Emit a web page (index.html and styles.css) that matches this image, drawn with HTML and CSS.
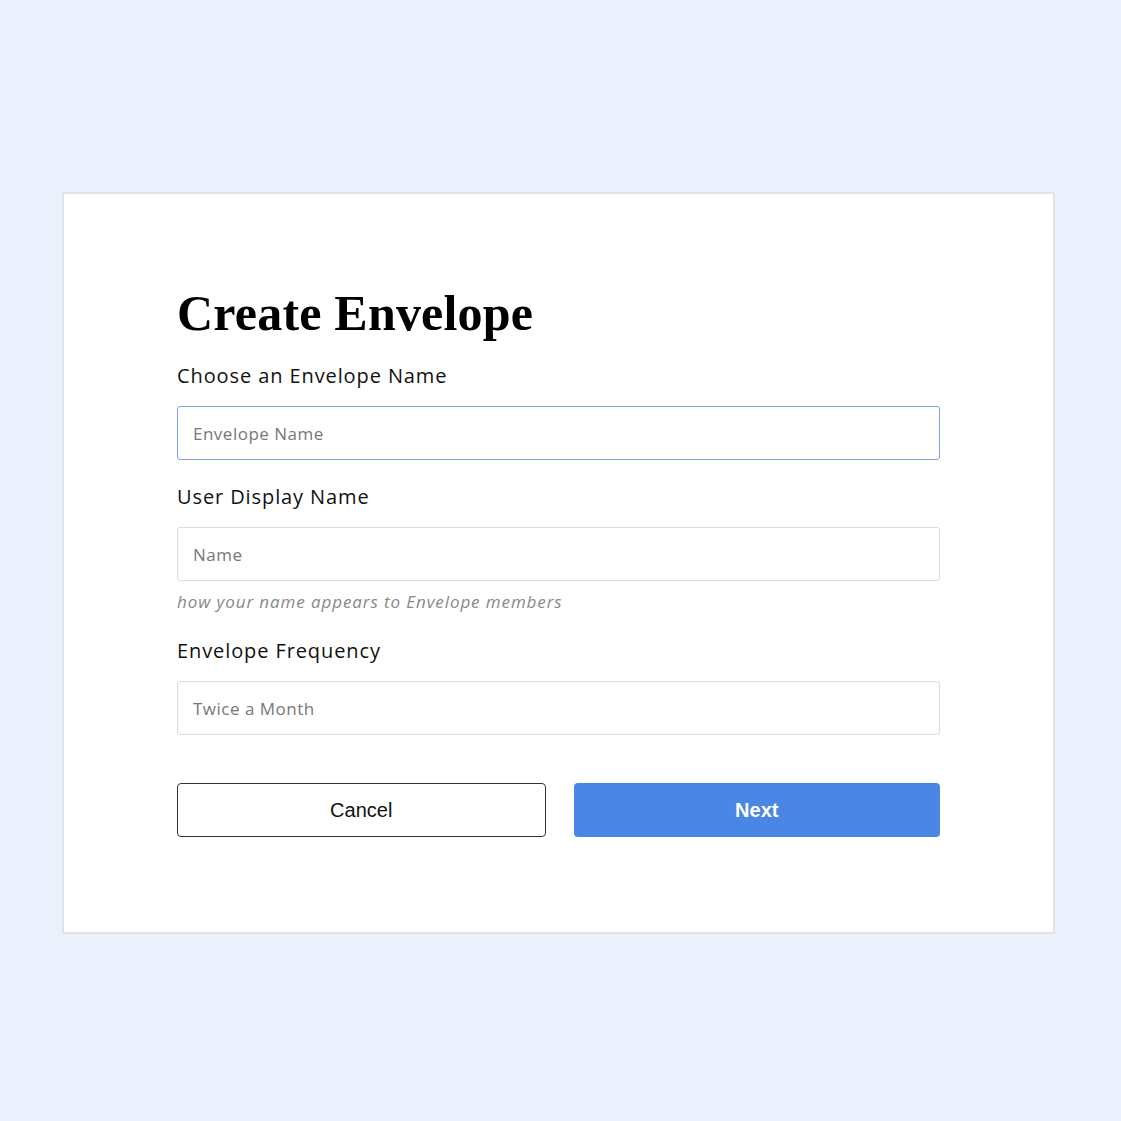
FILE: index.html
```html
<!DOCTYPE html>
<html lang="en">
<head>
<meta charset="utf-8">
<title>Create Envelope</title>
<link rel="stylesheet" href="styles.css">
</head>
<body>
<main class="card">
  <form class="form">
    <h1 class="title">Create Envelope</h1>
    <label class="label" for="env-name">Choose an Envelope Name</label>
    <input id="env-name" class="input input-focus" type="text" placeholder="Envelope Name">
    <label class="label label-gap" for="user-name">User Display Name</label>
    <input id="user-name" class="input" type="text" placeholder="Name">
    <p class="hint">how your name appears to Envelope members</p>
    <label class="label label-gap2" for="freq">Envelope Frequency</label>
    <input id="freq" class="input" type="text" placeholder="Twice a Month">
    <div class="actions">
      <button type="button" class="btn btn-cancel">Cancel</button>
      <button type="button" class="btn btn-next">Next</button>
    </div>
  </form>
</main>
</body>
</html>
```
FILE: styles.css
```css
html, body {
  margin: 0;
  padding: 0;
}
body {
  background: #eaf0fc;
  width: 1121px;
  height: 1121px;
  padding: 192px 0 0 62px;
  box-sizing: border-box;
  font-family: "Open Sans", "Liberation Sans", sans-serif;
}
.card {
  width: 993px;
  height: 742px;
  box-sizing: border-box;
  background: #fff;
  border: 2px solid #e2e3e6;
  padding: 0 113px;
}
.form {
  display: flex;
  flex-direction: column;
  width: 763px;
  padding-top: 93px;
}
.title {
  font-family: "Liberation Serif", "DejaVu Serif", serif;
  font-weight: 700;
  font-size: 50px;
  line-height: 52px;
  letter-spacing: 0.2px;
  margin: 0 0 24px 0;
  color: #000;
}
.label {
  font-size: 20px;
  line-height: 26px;
  letter-spacing: 0.9px;
  color: #111;
  margin-bottom: 17px;
}
.label-gap { margin-top: 24px; }
.label-gap2 { margin-top: 25px; }
.input {
  height: 54px;
  box-sizing: border-box;
  border: 1px solid #dcdcdc;
  border-radius: 3px;
  padding: 0 15px;
  font-family: inherit;
  font-size: 17px;
  letter-spacing: 0.5px;
  color: #333;
  background: #fff;
  outline: none;
}
.input::placeholder { color: #777; }
.input-focus {
  border: 1.5px solid #7ea3ea;
}
.hint {
  margin: 10px 0 0 0;
  font-style: italic;
  font-size: 17px;
  line-height: 22px;
  letter-spacing: 0.9px;
  color: #888;
}
.actions {
  display: flex;
  gap: 28px;
  margin-top: 48px;
}
.btn {
  flex: 1;
  height: 54px;
  border-radius: 4px;
  font-family: "Liberation Sans", sans-serif;
  font-size: 20px;
  cursor: pointer;
}
.btn-cancel {
  background: #fff;
  border: 1px solid #333;
  color: #111;
}
.btn-next {
  background: #4a86e3;
  border: none;
  color: #fff;
  font-weight: 700;
}
```
